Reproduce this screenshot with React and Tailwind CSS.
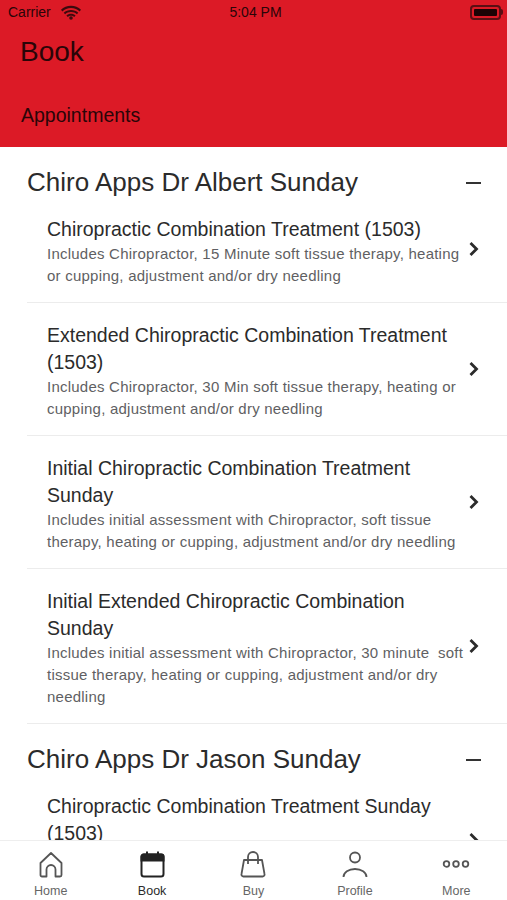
const sections = [
  {
    name: "Chiro Apps Dr Albert Sunday",
    items: [
      {
        title: "Chiropractic Combination Treatment (1503)",
        desc: "Includes Chiropractor, 15 Minute soft tissue therapy, heating or cupping, adjustment and/or dry needling",
      },
      {
        title: "Extended Chiropractic Combination Treatment (1503)",
        desc: "Includes Chiropractor, 30 Min soft tissue therapy, heating or cupping, adjustment and/or dry needling",
      },
      {
        title: "Initial Chiropractic Combination Treatment Sunday",
        desc: "Includes initial assessment with Chiropractor, soft tissue therapy, heating or cupping, adjustment and/or dry needling",
      },
      {
        title: "Initial Extended Chiropractic Combination Sunday",
        desc: "Includes initial assessment with Chiropractor, 30 minute \u00a0soft tissue therapy, heating or cupping, adjustment and/or dry needling",
      },
    ],
  },
  {
    name: "Chiro Apps Dr Jason Sunday",
    items: [
      // rest of this row is under the tab bar
      { title: "Chiropractic Combination Treatment Sunday (1503)" },
    ],
  },
];

function Chevron() {
  return (
    <svg width="12" height="16" viewBox="0 0 12 16" fill="none" stroke="#2b2b2b" strokeWidth="2.8" className="-mt-[5px] shrink-0">
      <path d="M2.5 2 L8.5 8 L2.5 14" />
    </svg>
  );
}

function HomeIcon() {
  return (
    <svg width="24" height="27" viewBox="0 0 24 27" fill="none" stroke="#555" strokeWidth="1.8" strokeLinejoin="round">
      <path d="M1.5 12 L12 2 L22.5 12 V24 a1.5 1.5 0 0 1 -1.5 1.5 H16.5 V18.5 a4.5 4.5 0 0 0 -9 0 V25.5 H3 a1.5 1.5 0 0 1 -1.5 -1.5 Z" />
    </svg>
  );
}

function BookIcon() {
  return (
    <svg width="25" height="27" viewBox="0 0 25 27" fill="none" stroke="#222" strokeWidth="2">
      <rect x="1.5" y="3.5" width="22" height="22" rx="2.5" />
      <path d="M1.5 5.5 a2 2 0 0 1 2 -2 H21.5 a2 2 0 0 1 2 2 V9.5 H1.5 Z" fill="#222" />
      <path d="M7 .5 V4 M18 .5 V4" />
    </svg>
  );
}

function BuyIcon() {
  return (
    <svg width="26" height="27" viewBox="0 0 26 27" fill="none" stroke="#555" strokeWidth="1.8" strokeLinejoin="round">
      <path d="M4 9 H22 L24.5 23 a2 2 0 0 1 -2 2.5 H3.5 a2 2 0 0 1 -2 -2.5 Z" />
      <path d="M8 13 V6 a5 5 0 0 1 10 0 V13" />
    </svg>
  );
}

function ProfileIcon() {
  return (
    <svg width="26" height="27" viewBox="0 0 26 27" fill="none" stroke="#555" strokeWidth="1.8">
      <circle cx="13" cy="6.5" r="5" />
      <path d="M1.5 26 a11.5 8 0 0 1 23 0" />
    </svg>
  );
}

function MoreIcon() {
  return (
    <svg width="28" height="27" viewBox="0 0 28 27" fill="none" stroke="#555" strokeWidth="1.8">
      <circle cx="4.5" cy="13" r="2.8" />
      <circle cx="14" cy="13" r="2.8" />
      <circle cx="23.5" cy="13" r="2.8" />
    </svg>
  );
}

const tabs = [
  { label: "Home", icon: <HomeIcon /> },
  { label: "Book", icon: <BookIcon />, active: true },
  { label: "Buy", icon: <BuyIcon /> },
  { label: "Profile", icon: <ProfileIcon /> },
  { label: "More", icon: <MoreIcon /> },
];

export default function App() {
  return (
    <div className="flex h-[900px] flex-col overflow-hidden bg-white font-['Liberation_Sans',Arial,sans-serif]">
      {/* Header */}
      <div className="h-[147px] shrink-0 bg-[#dc1a26] text-[#2a0508]">
        <div className="grid h-[24px] grid-cols-3 items-center pl-2 pr-1 text-sm">
          <div className="flex items-center gap-[10px]">
            <span>Carrier</span>
            <svg width="20" height="15" viewBox="0 0 20 15" fill="#3d0a0e">
              <path d="M10 3 C13.5 3 16.5 4.3 18.6 6.4 L20 4.8 C17.4 2.2 13.9 .8 10 .8 C6.1 .8 2.6 2.2 0 4.8 L1.4 6.4 C3.5 4.3 6.5 3 10 3 Z" />
              <path d="M10 7 C12.4 7 14.4 7.9 15.9 9.3 L17.3 7.7 C15.4 5.9 12.8 4.9 10 4.9 C7.2 4.9 4.6 5.9 2.7 7.7 L4.1 9.3 C5.6 7.9 7.6 7 10 7 Z" />
              <path d="M10 10.7 C11.3 10.7 12.4 11.2 13.2 12 L14.6 10.5 C13.4 9.4 11.8 8.8 10 8.8 C8.2 8.8 6.6 9.4 5.4 10.5 L6.8 12 C7.6 11.2 8.7 10.7 10 10.7 Z" />
              <circle cx="10" cy="13" r="1.8" />
            </svg>
          </div>
          <div className="text-center">5:04 PM</div>
          <div className="flex items-center justify-end">
            <div className="h-[15px] w-[31px] rounded-[4px] border-2 border-[#5a0f14] p-[2px]">
              <div className="h-full rounded-[1px] bg-[#1c0305]" />
            </div>
            <div className="h-[6px] w-[2px] rounded-r-sm bg-[#5a0f14]" />
          </div>
        </div>
        <div className="mt-[10px] pl-5 text-[28px] leading-9">Book</div>
        <div className="mt-[31px] pl-[21px] text-[19.5px] leading-7">Appointments</div>
      </div>

      {/* List */}
      <div className="min-h-0 flex-1 overflow-hidden">
        {sections.map((section) => (
          <div key={section.name} className="pl-[27px]">
            <div className="flex h-[49px] items-center justify-between pr-[26px] pt-[21px]">
              <span className="text-[26px] leading-7 text-[#2b2b2b]">{section.name}</span>
              <span className="mt-[2px] h-[2px] w-[15px] bg-[#333]" />
            </div>
            {section.items.map((item, i) => (
              <div
                key={item.title}
                className={`flex items-center pb-[15px] pr-[27px] ${i === 0 ? "pt-[20px]" : "border-t border-[#ececec] pt-[19px]"}`}
              >
                <div className={`min-w-0 flex-1 pl-5 ${item.desc ? "" : "pb-[44px]"}`}>
                  <div className="text-[19.5px] leading-[27px] text-[#2b2b2b]">{item.title}</div>
                  {item.desc && (
                    <div className="text-[15px] leading-[22px] tracking-[0.23px] text-[#5f5f63]">{item.desc}</div>
                  )}
                </div>
                <Chevron />
              </div>
            ))}
            <div className="border-t border-[#ececec]" />
          </div>
        ))}
      </div>

      {/* Tab bar */}
      <div className="grid h-[60px] shrink-0 grid-cols-5 border-t border-[#eeeeee] bg-white">
        {tabs.map((tab) => (
          <div key={tab.label} className="flex flex-col items-center pt-[10px]">
            <div className="flex h-[27px] items-center">{tab.icon}</div>
            <span className={`mt-[5px] text-[12.5px] leading-4 ${tab.active ? "text-[#2b2b2b]" : "text-[#666]"}`}>
              {tab.label}
            </span>
          </div>
        ))}
      </div>
    </div>
  );
}
